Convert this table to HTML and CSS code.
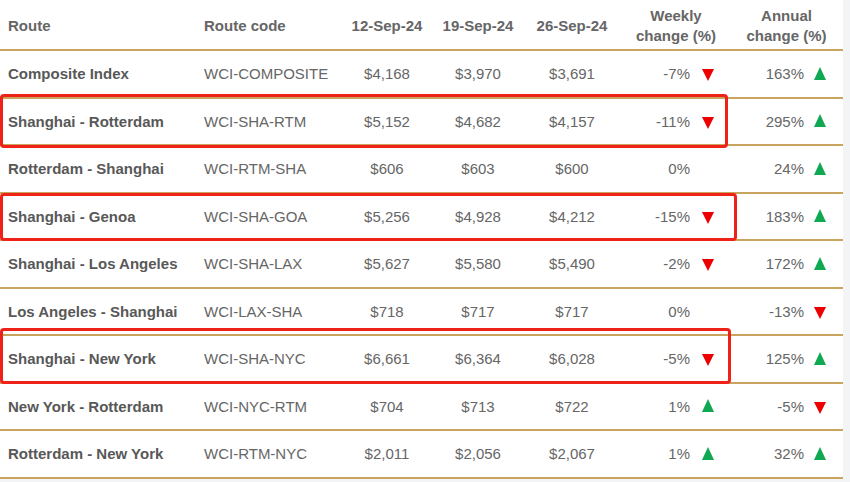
FILE: index.html
```html
<!DOCTYPE html>
<html lang="en">
<head>
<meta charset="utf-8">
<title>World Container Index</title>
<link rel="stylesheet" href="styles.css">
</head>
<body>
<div class="wrap">
  <div class="table">
    <div class="row head">
      <div class="c route">Route</div>
      <div class="c code">Route code</div>
      <div class="c num">12-Sep-24</div>
      <div class="c num">19-Sep-24</div>
      <div class="c num">26-Sep-24</div>
      <div class="c hchg">Weekly<br>change (%)</div>
      <div class="c hchg">Annual<br>change (%)</div>
    </div>
    <div class="row">
      <div class="c route">Composite Index</div>
      <div class="c code">WCI-COMPOSITE</div>
      <div class="c num">$4,168</div>
      <div class="c num">$3,970</div>
      <div class="c num">$3,691</div>
      <div class="c wk"><span>-7%</span><i class="arr down"></i></div>
      <div class="c an"><span>163%</span><i class="arr up"></i></div>
    </div>
    <div class="row">
      <div class="c route">Shanghai - Rotterdam</div>
      <div class="c code">WCI-SHA-RTM</div>
      <div class="c num">$5,152</div>
      <div class="c num">$4,682</div>
      <div class="c num">$4,157</div>
      <div class="c wk"><span>-11%</span><i class="arr down"></i></div>
      <div class="c an"><span>295%</span><i class="arr up"></i></div>
    </div>
    <div class="row">
      <div class="c route">Rotterdam - Shanghai</div>
      <div class="c code">WCI-RTM-SHA</div>
      <div class="c num">$606</div>
      <div class="c num">$603</div>
      <div class="c num">$600</div>
      <div class="c wk"><span>0%</span><i class="arr none"></i></div>
      <div class="c an"><span>24%</span><i class="arr up"></i></div>
    </div>
    <div class="row">
      <div class="c route">Shanghai - Genoa</div>
      <div class="c code">WCI-SHA-GOA</div>
      <div class="c num">$5,256</div>
      <div class="c num">$4,928</div>
      <div class="c num">$4,212</div>
      <div class="c wk"><span>-15%</span><i class="arr down"></i></div>
      <div class="c an"><span>183%</span><i class="arr up"></i></div>
    </div>
    <div class="row">
      <div class="c route">Shanghai - Los Angeles</div>
      <div class="c code">WCI-SHA-LAX</div>
      <div class="c num">$5,627</div>
      <div class="c num">$5,580</div>
      <div class="c num">$5,490</div>
      <div class="c wk"><span>-2%</span><i class="arr down"></i></div>
      <div class="c an"><span>172%</span><i class="arr up"></i></div>
    </div>
    <div class="row">
      <div class="c route">Los Angeles - Shanghai</div>
      <div class="c code">WCI-LAX-SHA</div>
      <div class="c num">$718</div>
      <div class="c num">$717</div>
      <div class="c num">$717</div>
      <div class="c wk"><span>0%</span><i class="arr none"></i></div>
      <div class="c an"><span>-13%</span><i class="arr down"></i></div>
    </div>
    <div class="row">
      <div class="c route">Shanghai - New York</div>
      <div class="c code">WCI-SHA-NYC</div>
      <div class="c num">$6,661</div>
      <div class="c num">$6,364</div>
      <div class="c num">$6,028</div>
      <div class="c wk"><span>-5%</span><i class="arr down"></i></div>
      <div class="c an"><span>125%</span><i class="arr up"></i></div>
    </div>
    <div class="row">
      <div class="c route">New York - Rotterdam</div>
      <div class="c code">WCI-NYC-RTM</div>
      <div class="c num">$704</div>
      <div class="c num">$713</div>
      <div class="c num">$722</div>
      <div class="c wk"><span>1%</span><i class="arr up"></i></div>
      <div class="c an"><span>-5%</span><i class="arr down"></i></div>
    </div>
    <div class="row">
      <div class="c route">Rotterdam - New York</div>
      <div class="c code">WCI-RTM-NYC</div>
      <div class="c num">$2,011</div>
      <div class="c num">$2,056</div>
      <div class="c num">$2,067</div>
      <div class="c wk"><span>1%</span><i class="arr up"></i></div>
      <div class="c an"><span>32%</span><i class="arr up"></i></div>
    </div>
  </div>
  <div class="mark mark-rtm"></div>
  <div class="mark mark-goa"></div>
  <div class="mark mark-nyc"></div>
</div>
</body>
</html>
```

FILE: styles.css
```css
html, body {
  margin: 0;
  padding: 0;
  background: #f3f4f6;
}
body {
  font-family: "Liberation Sans", Arial, sans-serif;
  font-size: 15px;
  color: #666;
}
.wrap {
  position: relative;
  width: 843px;
  background: #fff;
}
.table {
  display: flex;
  flex-direction: column;
}
.row {
  display: grid;
  grid-template-columns: 196px 144px 94px 88px 100px 108px 113px;
  height: 44.5px;
  padding-top: 1px;
  border-bottom: 2px solid #c9a45e;
  align-items: center;
  line-height: 20px;
}
.row.head {
  height: 47px;
  padding-top: 2px;
  font-weight: bold;
  color: #666;
}
.c {
  white-space: nowrap;
}
.route {
  padding-left: 8px;
  font-weight: bold;
  color: #585858;
}
.head .route {
  color: #666;
}
.code {
  padding-left: 8px;
}
.num {
  text-align: center;
}
.hchg {
  text-align: center;
}
.wk, .an {
  display: flex;
  justify-content: flex-end;
  align-items: center;
}
.wk {
  padding-right: 16px;
  gap: 12px;
}
.an {
  padding-right: 17px;
  gap: 10px;
}
.arr {
  display: block;
  width: 0;
  height: 0;
  border-left: 6.5px solid transparent;
  border-right: 6.5px solid transparent;
}
.arr.down {
  border-top: 12px solid #ee0000;
  margin-top: 2px;
}
.arr.up {
  border-bottom: 13px solid #10a852;
  margin-top: -2px;
}
.arr.none {
  border-top: 12px solid transparent;
}
.mark {
  position: absolute;
  left: 0;
  border: 3px solid #ee2219;
  border-radius: 4px;
  box-sizing: border-box;
}
.mark-rtm {
  top: 94px;
  width: 728px;
  height: 54px;
}
.mark-goa {
  top: 193px;
  width: 737px;
  height: 48px;
}
.mark-nyc {
  top: 328px;
  width: 731px;
  height: 56px;
}
```
